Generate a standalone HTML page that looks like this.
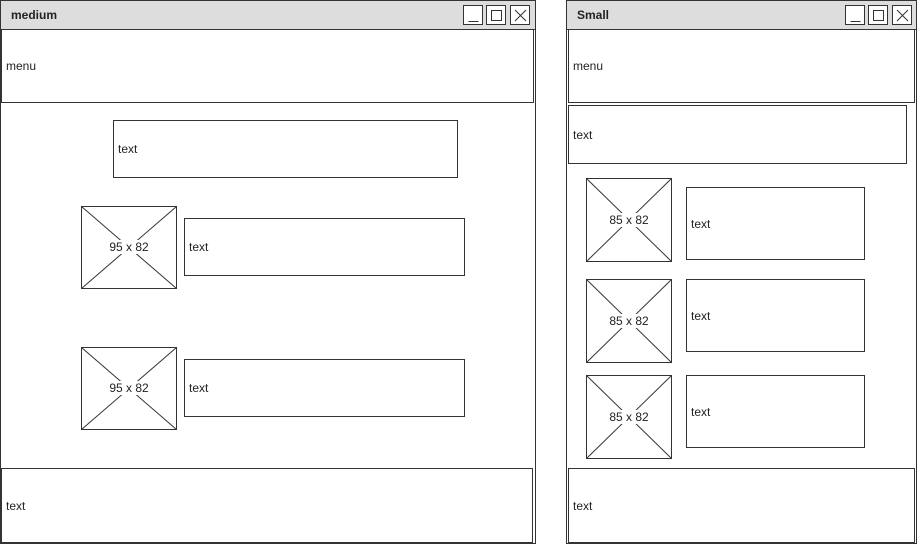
<!DOCTYPE html><html><head><style>
body{margin:0;width:917px;height:545px;background:#fff;position:relative;overflow:hidden;font-family:"Comic Sans MS","Liberation Sans",sans-serif;font-size:12px;color:#222}
.b{position:absolute;border:1px solid #333;box-sizing:border-box;background:#fff}
.t{position:absolute;display:flex;align-items:center;padding-left:4px}
.tb{position:absolute;background:#ddd;border:1px solid #333;box-sizing:border-box;font-weight:bold;font-size:12px;display:flex;align-items:center;padding-left:10px}
.btn{position:absolute;width:20px;height:20px;border:1px solid #333;box-sizing:border-box;background:#fff}
svg{position:absolute;left:0;top:0}
</style></head><body>
<div class="b" style="left:0;top:0;width:536px;height:544px"></div>
<div class="tb" style="left:0;top:0;width:536px;height:30px">medium</div>
<div class="btn" style="left:463px;top:5px"></div><div class="btn" style="left:486px;top:5px"></div><div class="btn" style="left:510px;top:5px"></div>
<div class="b t" style="left:1px;top:29px;width:533px;height:74px">menu</div>
<div class="b t" style="left:113px;top:120px;width:345px;height:58px">text</div>
<div class="b t" style="left:184px;top:218px;width:281px;height:58px">text</div>
<div class="b t" style="left:184px;top:359px;width:281px;height:58px">text</div>
<div class="b t" style="left:1px;top:468px;width:532px;height:75px">text</div>

<div class="b" style="left:566px;top:0;width:351px;height:544px"></div>
<div class="tb" style="left:566px;top:0;width:351px;height:30px">Small</div>
<div class="btn" style="left:845px;top:5px"></div><div class="btn" style="left:868px;top:5px"></div><div class="btn" style="left:892px;top:5px"></div>
<div class="b t" style="left:568px;top:29px;width:347px;height:74px">menu</div>
<div class="b t" style="left:568px;top:105px;width:339px;height:59px">text</div>
<div class="b t" style="left:686px;top:187px;width:179px;height:73px">text</div>
<div class="b t" style="left:686px;top:279px;width:179px;height:73px">text</div>
<div class="b t" style="left:686px;top:375px;width:179px;height:73px">text</div>
<div class="b t" style="left:568px;top:468px;width:347px;height:75px">text</div>

<svg width="917" height="545" font-family="Comic Sans MS, Liberation Sans, sans-serif" font-size="12" fill="none" stroke="#333">
<g stroke-width="1">
<path d="M468.5 21.5h10M491.5 10.5h10v10h-10zM515 10l11 11M526 10l-11 11"/>
<path d="M850.5 21.5h10M873.5 10.5h10v10h-10zM897 10l11 11M908 10l-11 11"/>
<rect x="81.5" y="206.5" width="95" height="82" fill="#fff"/><path d="M81.5 206.5L176.5 288.5M176.5 206.5L81.5 288.5"/>
<rect x="81.5" y="347.5" width="95" height="82" fill="#fff"/><path d="M81.5 347.5L176.5 429.5M176.5 347.5L81.5 429.5"/>
<rect x="586.5" y="178.5" width="85" height="83" fill="#fff"/><path d="M586.5 178.5L671.5 261.5M671.5 178.5L586.5 261.5"/>
<rect x="586.5" y="279.5" width="85" height="83" fill="#fff"/><path d="M586.5 279.5L671.5 362.5M671.5 279.5L586.5 362.5"/>
<rect x="586.5" y="375.5" width="85" height="83" fill="#fff"/><path d="M586.5 375.5L671.5 458.5M671.5 375.5L586.5 458.5"/>
</g>
<g fill="#222" stroke="none" text-anchor="middle">
<rect x="104" y="240" width="50" height="14" fill="#fff"/><text x="129" y="251">95 x 82</text>
<rect x="104" y="381" width="50" height="14" fill="#fff"/><text x="129" y="392">95 x 82</text>
<rect x="604" y="213" width="50" height="14" fill="#fff"/><text x="629" y="224">85 x 82</text>
<rect x="604" y="314" width="50" height="14" fill="#fff"/><text x="629" y="325">85 x 82</text>
<rect x="604" y="410" width="50" height="14" fill="#fff"/><text x="629" y="421">85 x 82</text>
</g>
</svg>
</body></html>
